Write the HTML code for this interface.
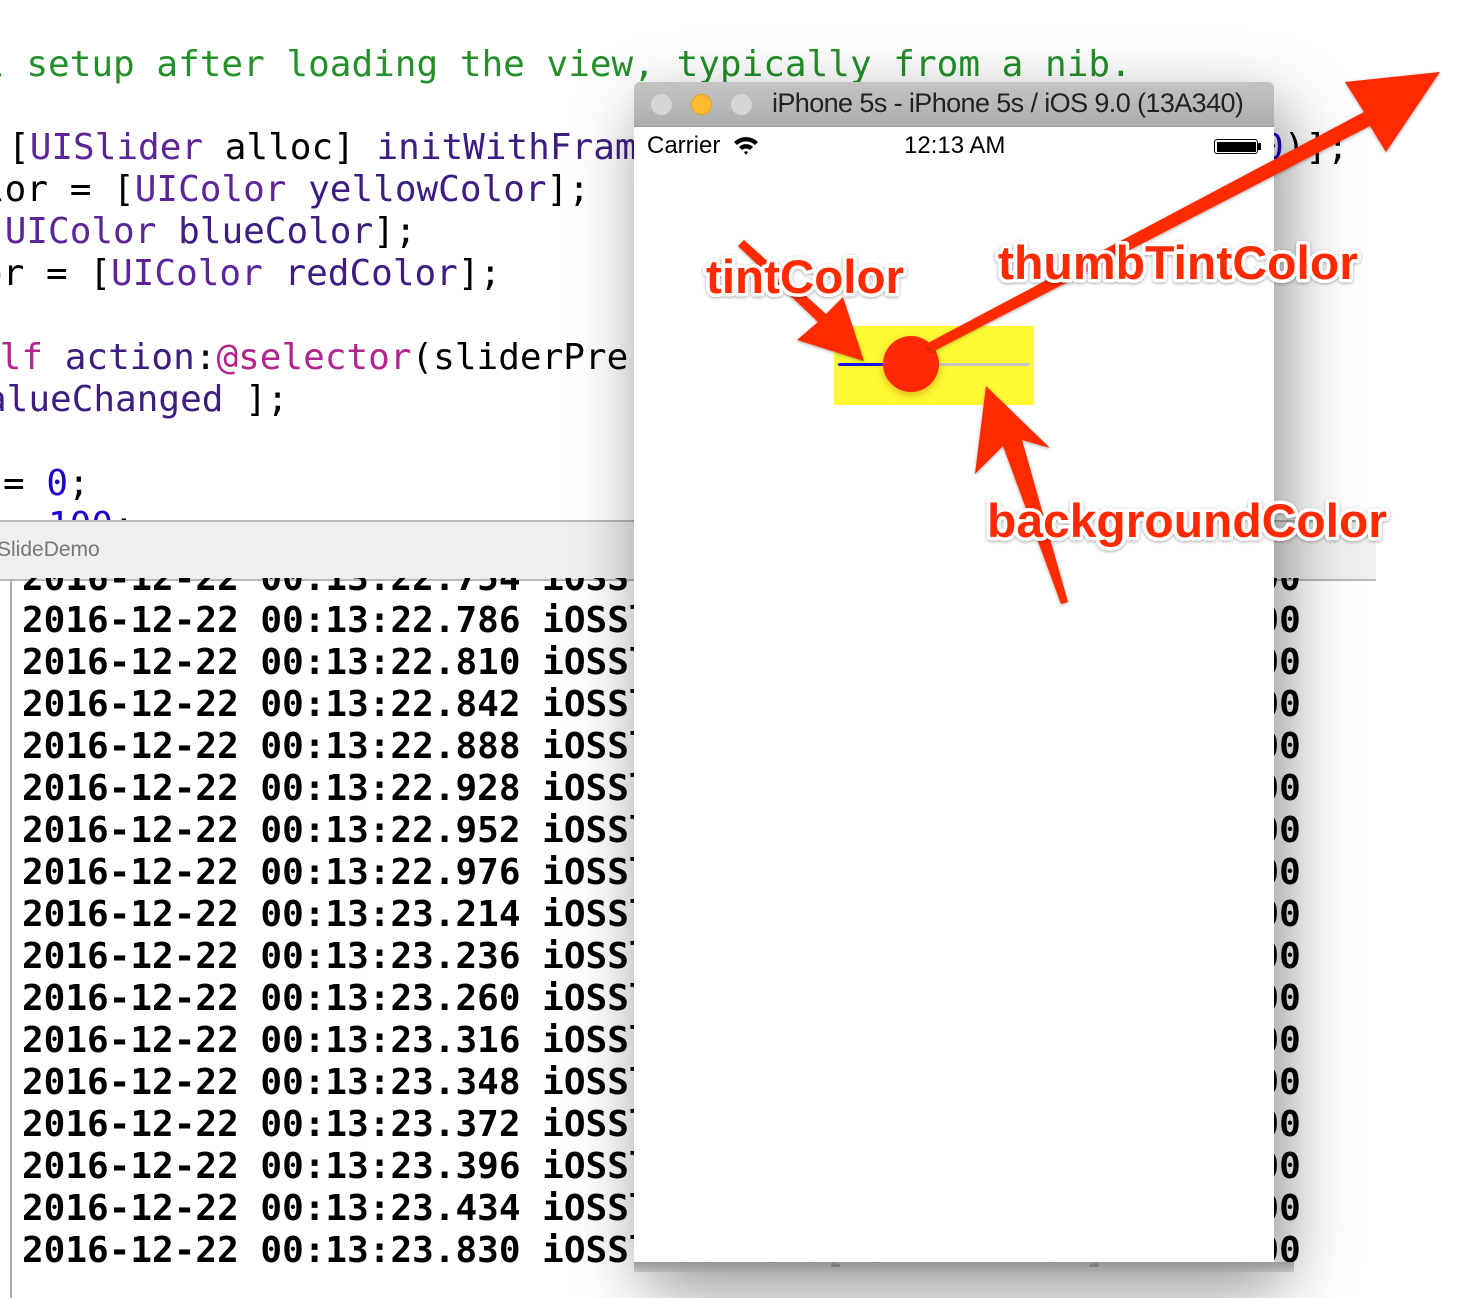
<!DOCTYPE html>
<html><head><meta charset="utf-8"><style>
html,body{margin:0;padding:0;width:1482px;height:1298px;overflow:hidden;background:#fff;position:relative}
.c{position:absolute;font-family:"DejaVu Sans Mono","Liberation Mono",monospace;font-size:36px;line-height:42px;white-space:pre;color:#000}
.g{color:#23902a}.p{color:#5c2699}.m{color:#3d1d81}.k{color:#b3258c}.n{color:#1c00cf}
.log{position:absolute;left:0;top:578px;width:1482px;height:720px;overflow:hidden}
.log div{position:absolute;left:22px;font-family:"DejaVu Sans Mono","Liberation Mono",monospace;font-weight:bold;font-size:36px;line-height:42px;white-space:pre;color:#000}
.sans{font-family:"Liberation Sans",sans-serif}
</style></head><body>
<div class="c g" style="left:-17px;top:44px">l setup after loading the view, typically from a nib.</div>
<div class="c" style="left:8px;top:127px">[<span class="p">UISlider</span> alloc] <span class="m">initWithFram</span></div>
<div class="c" style="left:-17px;top:169px">lor = [<span class="p">UIColor</span> <span class="m">yellowColor</span>];</div>
<div class="c" style="left:-17px;top:211px">[<span class="p">UIColor</span> <span class="m">blueColor</span>];</div>
<div class="c" style="left:-19px;top:253px">or = [<span class="p">UIColor</span> <span class="m">redColor</span>];</div>
<div class="c" style="left:-22px;top:337px"><span class="k">elf</span> <span class="m">action</span>:<span class="k">@selector</span>(sliderPre</div>
<div class="c" style="left:-15px;top:379px"><span class="m">alueChanged</span> ];</div>
<div class="c" style="left:3px;top:463px">= <span class="n">0</span>;</div>
<div class="c" style="left:48px;top:505px;height:15px;overflow:hidden"><span class="n">100</span>;</div>
<div class="c" style="left:1262px;top:127px"><span class="n">0</span>)];</div>

<div style="position:absolute;left:0;top:520px;width:1376px;height:57px;background:#efefef;border-top:2px solid #b8b8b8;border-bottom:2px solid #b8b8b8"></div>
<div class="sans" style="position:absolute;left:-3px;top:538px;font-size:21px;color:#777">SlideDemo</div>
<div style="position:absolute;left:10px;top:580px;width:2px;height:718px;background:#aaa"></div>

<div class="log">
<div style="top:-20px">2016-12-22 00:13:22.754 iOSSliderDemo[2345:123456] 10.00000</div>
<div style="top:22px">2016-12-22 00:13:22.786 iOSSliderDemo[2345:123456] 10.00000</div>
<div style="top:64px">2016-12-22 00:13:22.810 iOSSliderDemo[2345:123456] 10.00000</div>
<div style="top:106px">2016-12-22 00:13:22.842 iOSSliderDemo[2345:123456] 10.00000</div>
<div style="top:148px">2016-12-22 00:13:22.888 iOSSliderDemo[2345:123456] 10.00000</div>
<div style="top:190px">2016-12-22 00:13:22.928 iOSSliderDemo[2345:123456] 10.00000</div>
<div style="top:232px">2016-12-22 00:13:22.952 iOSSliderDemo[2345:123456] 10.00000</div>
<div style="top:274px">2016-12-22 00:13:22.976 iOSSliderDemo[2345:123456] 10.00000</div>
<div style="top:316px">2016-12-22 00:13:23.214 iOSSliderDemo[2345:123456] 10.00000</div>
<div style="top:358px">2016-12-22 00:13:23.236 iOSSliderDemo[2345:123456] 10.00000</div>
<div style="top:400px">2016-12-22 00:13:23.260 iOSSliderDemo[2345:123456] 10.00000</div>
<div style="top:442px">2016-12-22 00:13:23.316 iOSSliderDemo[2345:123456] 10.00000</div>
<div style="top:484px">2016-12-22 00:13:23.348 iOSSliderDemo[2345:123456] 10.00000</div>
<div style="top:526px">2016-12-22 00:13:23.372 iOSSliderDemo[2345:123456] 10.00000</div>
<div style="top:568px">2016-12-22 00:13:23.396 iOSSliderDemo[2345:123456] 10.00000</div>
<div style="top:610px">2016-12-22 00:13:23.434 iOSSliderDemo[2345:123456] 10.00000</div>
<div style="top:652px">2016-12-22 00:13:23.830 iOSSliderDemo[2345:123456] 10.00000</div>
</div>

<!-- simulator -->
<div style="position:absolute;left:634px;top:82px;width:640px;height:1180px;background:#fff;box-shadow:10px 25px 70px rgba(0,0,0,.45);border-radius:6px 6px 0 0"></div>
<div style="position:absolute;left:634px;top:1262px;width:660px;height:10px;background:linear-gradient(rgba(150,150,150,.9),rgba(170,170,170,.6))"></div>
<div style="position:absolute;left:634px;top:82px;width:640px;height:44px;background:linear-gradient(#c4c4c4,#adadad);border-radius:6px 6px 0 0;border-bottom:1px solid #999"></div>
<div style="position:absolute;left:651px;top:94px;width:21px;height:21px;border-radius:50%;background:#d6d6d6"></div>
<div style="position:absolute;left:691px;top:94px;width:21px;height:21px;border-radius:50%;background:#fdbb2d;box-shadow:inset 0 0 0 1px #dea123"></div>
<div style="position:absolute;left:731px;top:94px;width:21px;height:21px;border-radius:50%;background:#d6d6d6"></div>
<div class="sans" style="position:absolute;left:772px;top:88px;font-size:27px;color:#222;letter-spacing:-0.6px">iPhone 5s - iPhone 5s / iOS 9.0 (13A340)</div>
<div class="sans" style="position:absolute;left:647px;top:132px;font-size:24px;color:#000">Carrier</div>
<svg style="position:absolute;left:733px;top:136px" width="26" height="20" viewBox="0 0 26 20"><path d="M1 6 A17 17 0 0 1 25 6 L22 9 A13 13 0 0 0 4 9Z M6 11 A10 10 0 0 1 20 11 L17 14 A6 6 0 0 0 9 14Z M11 16 A3 3 0 0 1 15 16 L13 19Z" fill="#000"/></svg>
<div class="sans" style="position:absolute;left:904px;top:132px;font-size:24px;color:#000">12:13 AM</div>
<div style="position:absolute;left:1214px;top:139px;width:44px;height:15px;border:1.5px solid #000;border-radius:3px;box-sizing:border-box;padding:1.5px"><div style="width:100%;height:100%;background:#000"></div></div>
<div style="position:absolute;left:1258px;top:143px;width:3px;height:7px;background:#000"></div>

<!-- slider -->
<div style="position:absolute;left:834px;top:326px;width:200px;height:79px;background:#fdfa33"></div>
<div style="position:absolute;left:838px;top:363px;width:60px;height:3px;background:#1414f5;border-radius:2px"></div>
<div style="position:absolute;left:920px;top:363px;width:110px;height:3px;background:#c4c4c4;border-radius:2px"></div>
<div style="position:absolute;left:883px;top:336px;width:56px;height:56px;border-radius:50%;background:#ff2a05;box-shadow:0 3px 8px rgba(200,120,0,.5)"></div>

<svg style="position:absolute;left:0;top:0" width="1482" height="1298" viewBox="0 0 1482 1298">
<defs><filter id="s" x="-20%" y="-20%" width="140%" height="140%"><feDropShadow dx="0" dy="1" stdDeviation="1.5" flood-color="#000" flood-opacity=".35"/></filter></defs>
<g fill="#ff2a00" filter="url(#s)">
<polygon points="926,344 932,352 1370,126 1386,152 1440,72 1345,82 1364,112"/>
<polygon points="738,246 744,240 826,314 843,297 864,361 797,340 818,322"/>
<polygon points="1068,602 1061,604 1003,446 975,474 986,386 1050,448 1022,440"/>
</g>
<g font-family="Liberation Sans, sans-serif" font-weight="bold" fill="#ff2a00" stroke="#fff" stroke-width="7" paint-order="stroke" stroke-linejoin="round" filter="url(#s)">
<text x="706" y="293" font-size="47" textLength="198" lengthAdjust="spacingAndGlyphs">tintColor</text>
<text x="998" y="279" font-size="47" textLength="360" lengthAdjust="spacingAndGlyphs">thumbTintColor</text>
<text x="987" y="537" font-size="47" textLength="400" lengthAdjust="spacingAndGlyphs">backgroundColor</text>
</g>
</svg>
</body></html>
